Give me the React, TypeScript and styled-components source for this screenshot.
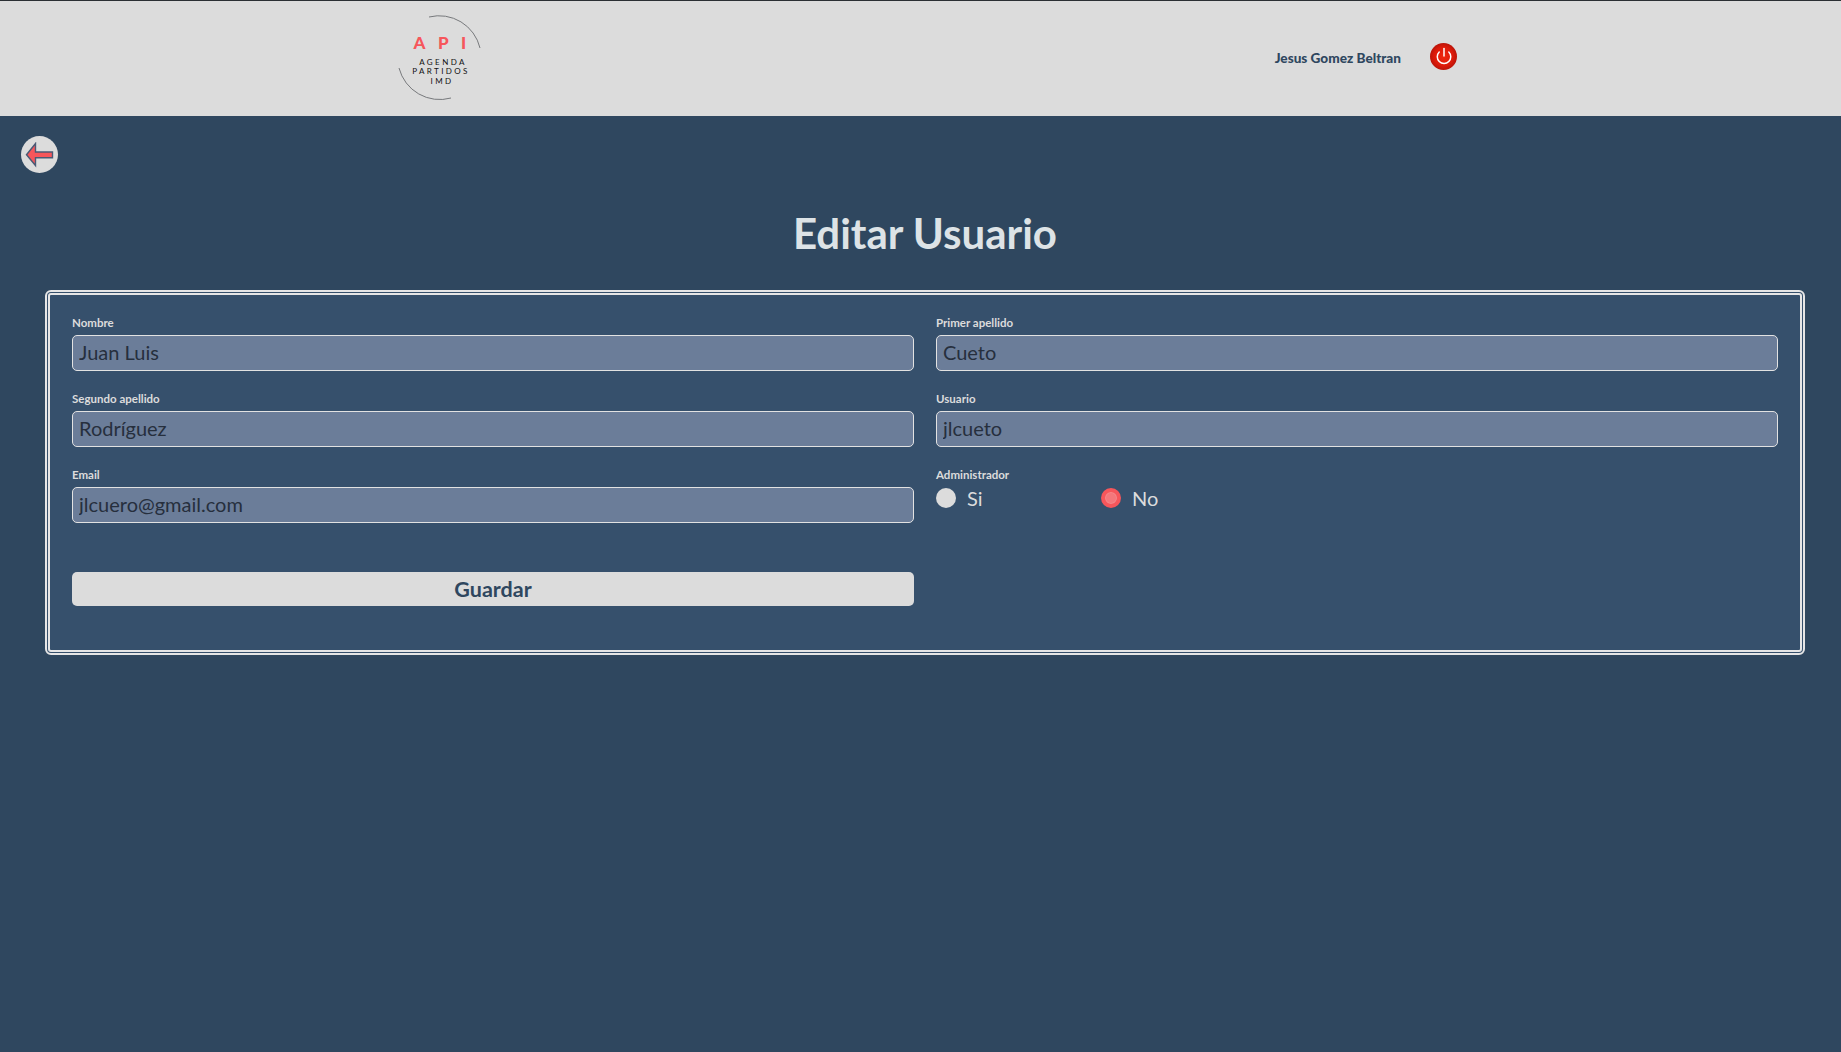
import { Power } from 'lucide-react';
import styled, { createGlobalStyle } from 'styled-components';

const GlobalStyle = createGlobalStyle`
  html, body {
    margin: 0;
    padding: 0;
    background-color: #2f475f;
  }
  * {
    box-sizing: border-box;
  }
  body {
    font-family: Lato, "Noto Sans", sans-serif;
  }
`;

const Page = styled.div`
  min-height: 1052px;
  background-color: #2f475f;
`;

const Header = styled.header`
  height: 116px;
  border-top: 1px solid #2b2f33;
  background-color: #dcdcdc;
  display: flex;
  align-items: center;
  padding: 0 384px 0 395px;
`;

const Logo = styled.svg`
  width: 90px;
  height: 96px;
  margin-top: -1px;
`;

const UserName = styled.span`
  margin: -2px 0 0 auto;
  font-size: 13.6px;
  font-weight: 900;
  color: #2f475f;
`;

const LogoutButton = styled.button`
  width: 27px;
  height: 27px;
  margin: -5px 0 0 29px;
  padding: 0;
  border: none;
  border-radius: 50%;
  display: flex;
  align-items: center;
  justify-content: center;
  color: #ffffff;
  background: radial-gradient(circle at 50% 50%, #f0280f 0%, #dc1a0a 50%, #8a0b07 100%);
`;

const BackBar = styled.div`
  padding: 20px 0 0 21px;
`;

const BackButton = styled.button`
  width: 37px;
  height: 37px;
  padding: 0;
  border: none;
  border-radius: 50%;
  background-color: #dcdcdc;
  display: flex;
  align-items: center;
  justify-content: center;
`;

const Main = styled.main`
  padding: 0 36px 0 45px;
`;

const Title = styled.h1`
  margin: 35px 0 32px;
  font-size: 42px;
  line-height: 50px;
  font-weight: 700;
  text-align: center;
  color: #dde3e6;
`;

const FormPanel = styled.form`
  height: 365px;
  padding: 21px 22px 0 22px;
  border: 5px double #e6e6e6;
  border-radius: 6px;
  background-color: #36506c;
  display: grid;
  grid-template-columns: 1fr 1fr;
  grid-auto-rows: 76px;
  column-gap: 22px;
  align-content: start;
`;

const Field = styled.div`
  display: flex;
  flex-direction: column;
`;

const Label = styled.label`
  height: 19px;
  font-size: 11.5px;
  line-height: 13px;
  font-weight: 700;
  color: #dcdcdc;
`;

const TextInput = styled.input`
  width: 100%;
  height: 36px;
  padding: 0 6px 3px;
  border: 1px solid #e2e2e2;
  border-radius: 5px;
  background-color: #6b7d99;
  font-family: inherit;
  font-size: 20px;
  color: #262f3d;
  outline: none;
`;

const RadioRow = styled.div`
  display: flex;
  margin-top: -1px;
`;

const RadioOption = styled.label`
  width: 165px;
  height: 24px;
  display: flex;
  align-items: center;
  gap: 11px;
  font-size: 20px;
  line-height: 22px;
  color: #dcdcdc;
`;

const RadioDot = styled.span<{ $checked?: boolean }>`
  width: 20px;
  height: 20px;
  border-radius: 50%;
  background-color: ${(props) => (props.$checked ? '#f4777b' : '#dcdcdc')};
  border: ${(props) => (props.$checked ? '4px solid #f6565b' : 'none')};
  box-shadow: ${(props) => (props.$checked ? '0 0 0 1px #f5888b inset' : 'none')};
`;

const ButtonSlot = styled.div`
  grid-column: 1;
  padding-top: 28px;
`;

const SaveButton = styled.button`
  width: 100%;
  height: 34px;
  border: none;
  border-radius: 5px;
  background-color: #dcdcdc;
  font-family: inherit;
  font-size: 21.5px;
  font-weight: 700;
  color: #2f475f;
`;

const fields = [
  { id: 'nombre', label: 'Nombre', value: 'Juan Luis' },
  { id: 'primer', label: 'Primer apellido', value: 'Cueto' },
  { id: 'segundo', label: 'Segundo apellido', value: 'Rodríguez' },
  { id: 'usuario', label: 'Usuario', value: 'jlcueto' },
  { id: 'email', label: 'Email', value: 'jlcuero@gmail.com' },
];

export default function App() {
  return (
    <Page>
      <GlobalStyle />
      <Header>
        <Logo viewBox="395 10 90 96">
          <path d="M429 17 A42 42 0 0 1 480 48" fill="none" stroke="#77797c" strokeWidth="1" />
          <path d="M399 68 A42 42 0 0 0 451 98" fill="none" stroke="#77797c" strokeWidth="1" />
          <text x="413.5" y="49" fontFamily="Lato" fontSize="17" fontWeight="900" fill="#f6565b" letterSpacing="12.5">
            API
          </text>
          <g fontFamily="Lato" fontSize="8" fill="#111111" textAnchor="middle" letterSpacing="2.4">
            <text x="443" y="65">AGENDA</text>
            <text x="441" y="74">PARTIDOS</text>
            <text x="442" y="84">IMD</text>
          </g>
        </Logo>
        <UserName>Jesus Gomez Beltran</UserName>
        <LogoutButton type="button" aria-label="Salir">
          <Power size={18} strokeWidth={2} />
        </LogoutButton>
      </Header>
      <BackBar>
        <BackButton type="button" aria-label="Volver">
          <svg width="30" height="26" viewBox="0 0 30 26">
            <path
              d="M1.5 12.8 L10.5 1.5 L10.5 10 L27.5 10 L27.5 15.7 L10.5 15.7 L10.5 23.5 Z"
              fill="#f6565b"
              stroke="#4a5a75"
              strokeWidth="1.4"
            />
          </svg>
        </BackButton>
      </BackBar>
      <Main>
        <Title>Editar Usuario</Title>
        <FormPanel>
          {fields.map((field) => (
            <Field key={field.id}>
              <Label htmlFor={field.id}>{field.label}</Label>
              <TextInput id={field.id} defaultValue={field.value} />
            </Field>
          ))}
          <Field>
            <Label>Administrador</Label>
            <RadioRow>
              <RadioOption>
                <RadioDot />
                Si
              </RadioOption>
              <RadioOption>
                <RadioDot $checked />
                No
              </RadioOption>
            </RadioRow>
          </Field>
          <ButtonSlot>
            <SaveButton type="button">Guardar</SaveButton>
          </ButtonSlot>
        </FormPanel>
      </Main>
    </Page>
  );
}
